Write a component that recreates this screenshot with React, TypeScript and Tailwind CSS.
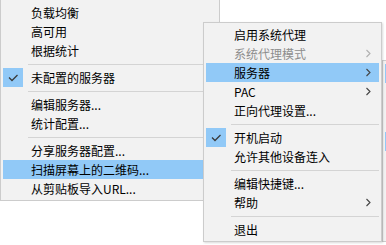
type Item =
  | { kind: "sep" }
  | {
      kind: "item";
      label: string;
      checked?: boolean;
      active?: boolean;
      disabled?: boolean;
      submenu?: boolean;
    };

const leftMenu: Item[] = [
  { kind: "item", label: "负载均衡" },
  { kind: "item", label: "高可用" },
  { kind: "item", label: "根据统计" },
  { kind: "sep" },
  { kind: "item", label: "未配置的服务器", checked: true },
  { kind: "sep" },
  { kind: "item", label: "编辑服务器..." },
  { kind: "item", label: "统计配置..." },
  { kind: "sep" },
  { kind: "item", label: "分享服务器配置..." },
  { kind: "item", label: "扫描屏幕上的二维码...", active: true },
  { kind: "item", label: "从剪贴板导入URL..." },
];

const rightMenu: Item[] = [
  { kind: "item", label: "启用系统代理" },
  { kind: "item", label: "系统代理模式", disabled: true, submenu: true },
  { kind: "item", label: "服务器", active: true, submenu: true },
  { kind: "item", label: "PAC", submenu: true },
  { kind: "item", label: "正向代理设置..." },
  { kind: "sep" },
  { kind: "item", label: "开机启动", checked: true },
  { kind: "item", label: "允许其他设备连入" },
  { kind: "sep" },
  { kind: "item", label: "编辑快捷键..." },
  { kind: "item", label: "帮助", submenu: true },
  { kind: "sep" },
  { kind: "item", label: "退出" },
];

function Check() {
  return (
    <svg width="20" height="19" viewBox="0 0 20 19">
      <polyline points="6,9.5 9,12.5 14.5,7" fill="none" stroke="#3a3a3a" strokeWidth="1.3" />
    </svg>
  );
}

function Chevron({ color }: { color: string }) {
  return (
    <svg width="6" height="9" viewBox="0 0 6 9">
      <polyline points="1.5,1 5,4.5 1.5,8" fill="none" stroke={color} strokeWidth="1.1" />
    </svg>
  );
}

function MenuRows({ items }: { items: Item[] }) {
  return (
    <>
      {items.map((it, i) =>
        it.kind === "sep" ? (
          <div key={i} className="h-[8px] flex items-center pl-[25px]">
            <div className="h-px w-full bg-[#d4d4d4]" />
          </div>
        ) : (
          <div
            key={i}
            className={`h-[19px] flex items-center ${it.active ? "bg-[#91c9f7]" : ""}`}
          >
            <div className={`w-[20px] h-[19px] shrink-0 ${it.checked ? "bg-[#91c9f7]" : ""}`}>
              {it.checked && <Check />}
            </div>
            <span
              className={`ml-[8px] flex-1 text-[12px] leading-none whitespace-nowrap ${
                it.disabled ? "text-[#8d8d8d]" : "text-black"
              }`}
            >
              {it.label}
            </span>
            {it.submenu && (
              <span className="w-[14px] flex justify-start">
                <Chevron color={it.disabled ? "#b0b0b0" : "#444"} />
              </span>
            )}
          </div>
        )
      )}
    </>
  );
}

export default function App() {
  return (
    <div
      className="relative w-[386px] h-[245px] bg-white overflow-hidden"
      style={{ fontFamily: '"Noto Sans CJK SC", "Noto Sans", sans-serif' }}
    >
      {/* main menu, partly hidden under the submenu */}
      <div className="absolute left-0 top-0 w-[220px] bg-[#f2f2f2] border-x border-b border-[#cccccc] px-[2px] pt-[3px] pb-[2px]">
        <MenuRows items={leftMenu} />
      </div>

      {/* third-level menu peeking at the right edge */}
      <div className="absolute left-[382px] top-[60px] w-[40px] h-[182px] bg-[#f2f2f2] border border-[#cccccc]">
        <div className="absolute left-[2px] top-[3px] w-[30px] h-[19px] bg-[#91c9f7]" />
        <div className="absolute left-[2px] top-[71px] w-[20px] h-[19px] bg-[#91c9f7]" />
      </div>

      {/* submenu */}
      <div className="absolute left-[203px] top-[22px] w-[179px] bg-[#f2f2f2] border border-[#cccccc] p-[2px] shadow-[1px_1px_2px_rgba(0,0,0,0.15)]">
        <MenuRows items={rightMenu} />
      </div>
    </div>
  );
}
